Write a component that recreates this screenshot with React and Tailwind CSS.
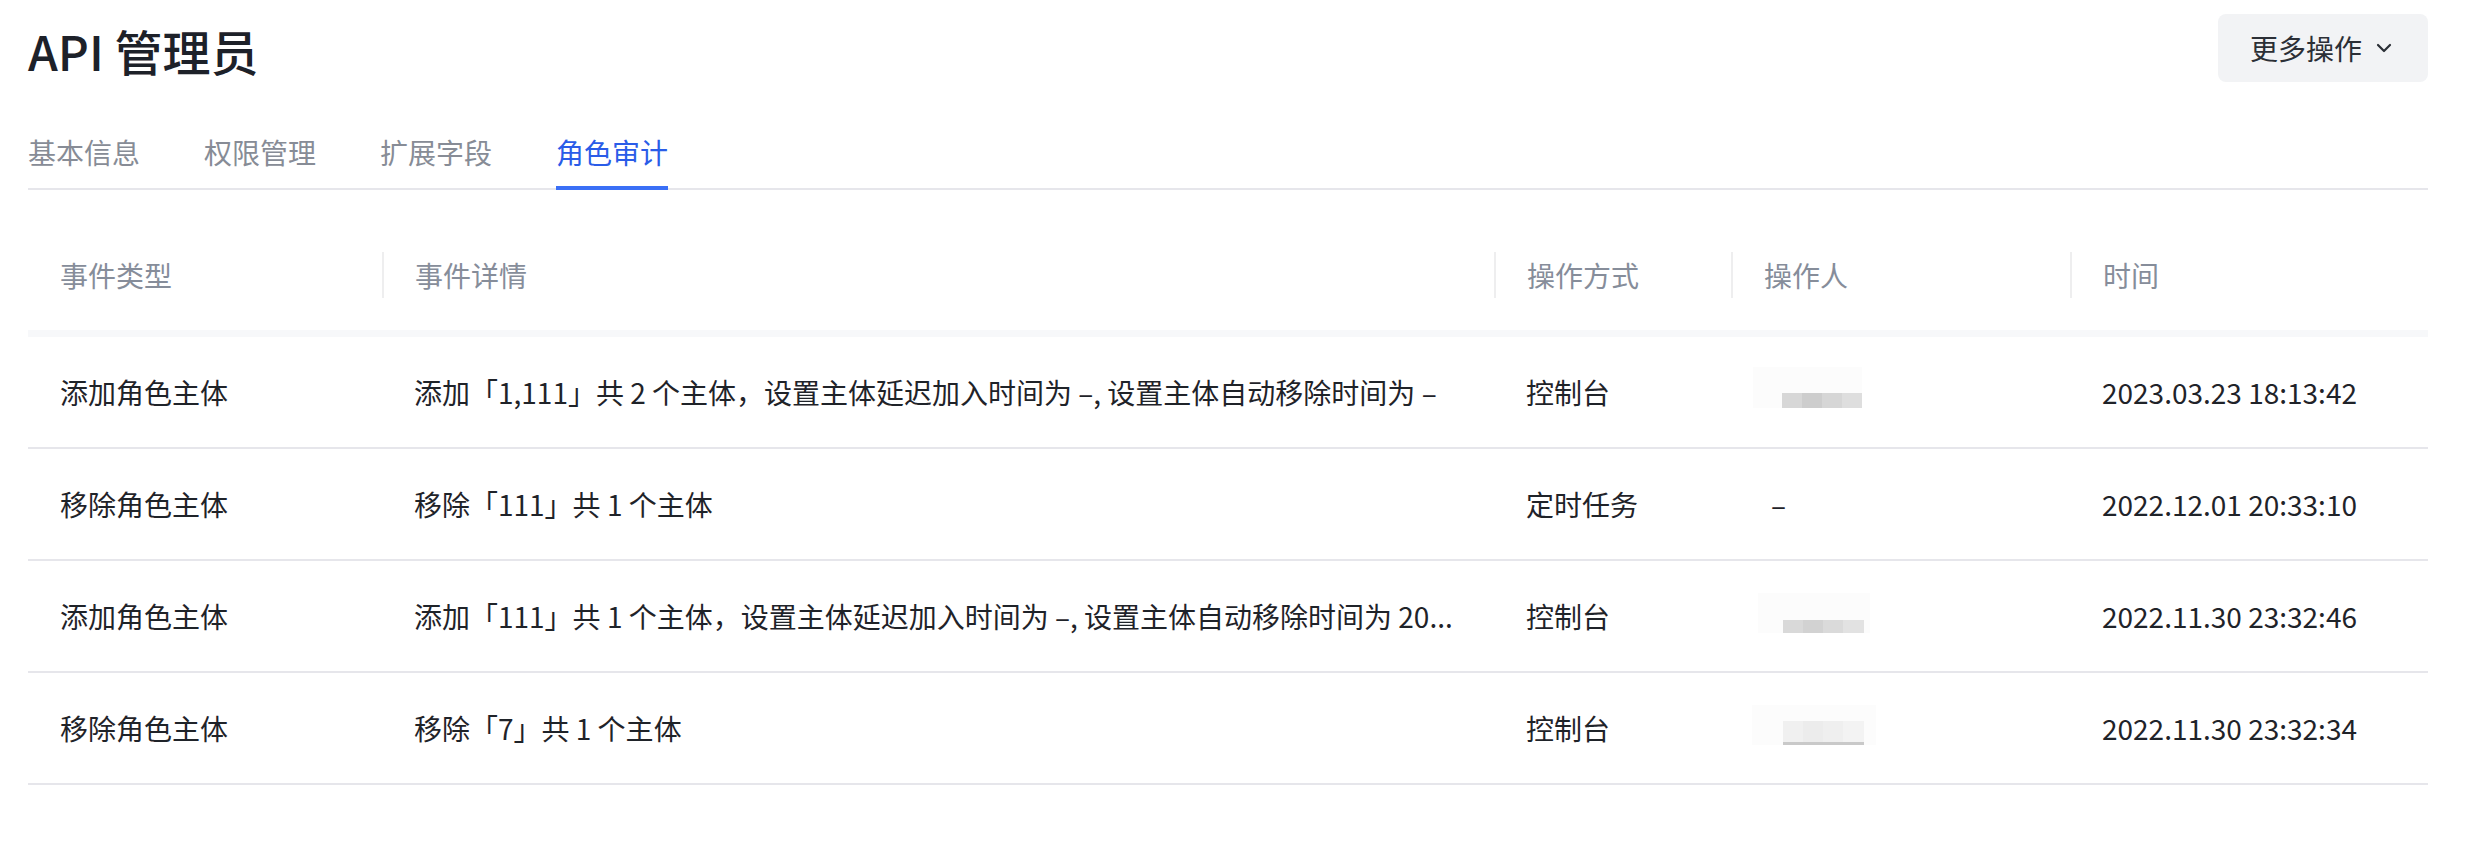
import { ChevronDown } from "lucide-react";

const tabs = ["基本信息", "权限管理", "扩展字段", "角色审计"];

const columns = ["事件类型", "事件详情", "操作方式", "操作人", "时间"];

const rows = [
  {
    type: "添加角色主体",
    detail: "添加「1,111」共 2 个主体，设置主体延迟加入时间为 –, 设置主体自动移除时间为 –",
    via: "控制台",
    operator: "a",
    time: "2023.03.23 18:13:42",
  },
  {
    type: "移除角色主体",
    detail: "移除「111」共 1 个主体",
    via: "定时任务",
    operator: null,
    time: "2022.12.01 20:33:10",
  },
  {
    type: "添加角色主体",
    detail: "添加「111」共 1 个主体，设置主体延迟加入时间为 –, 设置主体自动移除时间为 20...",
    via: "控制台",
    operator: "b",
    time: "2022.11.30 23:32:46",
  },
  {
    type: "移除角色主体",
    detail: "移除「7」共 1 个主体",
    via: "控制台",
    operator: "c",
    time: "2022.11.30 23:32:34",
  },
];

// mosaic placeholder for the masked operator name
function Masked({ variant }) {
  if (variant === "a") {
    return (
      <div className="-ml-[10px] -mt-[9px] flex h-[41px] w-[109px] flex-col bg-[#fcfcfc]">
        <div className="mt-[26px] ml-[29px] flex h-[15px] w-[80px] blur-[0.6px]">
          <div className="w-[20px] bg-[#d7d7d7]" />
          <div className="w-[20px] bg-[#cdcdcd]" />
          <div className="w-[20px] bg-[#d6d6d6]" />
          <div className="w-[20px] bg-[#dedede]" />
        </div>
      </div>
    );
  }
  if (variant === "b") {
    return (
      <div className="-ml-[5px] -mt-[6px] flex h-[40px] w-[112px] flex-col bg-[#fcfcfc]">
        <div className="mt-[27px] ml-[25px] flex h-[13px] w-[81px] blur-[0.6px]">
          <div className="w-[20px] bg-[#d9d9d9]" />
          <div className="w-[20px] bg-[#d2d2d2]" />
          <div className="w-[20px] bg-[#dadada]" />
          <div className="w-[21px] bg-[#e2e2e2]" />
        </div>
      </div>
    );
  }
  return (
    <div className="-ml-[11px] -mt-[6px] flex h-[40px] w-[124px] flex-col bg-[#fcfcfc]">
      <div className="mt-[16px] ml-[31px] flex h-[24px] w-[81px] flex-col blur-[0.6px]">
        <div className="flex flex-1">
          <div className="w-[20px] bg-[#f0f0f0]" />
          <div className="w-[20px] bg-[#ececec]" />
          <div className="w-[20px] bg-[#efefef]" />
          <div className="w-[21px] bg-[#f3f3f3]" />
        </div>
        <div className="h-[3px] bg-[#c9c9c9]" />
      </div>
    </div>
  );
}

export default function App() {
  return (
    <div className="h-[856px] w-[2466px] bg-white pl-[28px] pr-[38px] pt-[14px] font-['Noto_Sans_CJK_SC','Noto_Sans',sans-serif] text-[#1f2329]">
      <div className="flex h-[68px] items-center justify-between">
        <h1 className="mt-[4px] text-[48px] font-medium leading-none text-[#1d2129]">API 管理员</h1>
        <button className="flex h-[68px] items-center gap-[10px] rounded-[8px] bg-[#f2f3f5] px-[32px] text-[28px] text-[#2b2f36]">
          更多操作
          <ChevronDown size={24} strokeWidth={2.2} />
        </button>
      </div>

      <div className="mt-[50px] flex gap-[64px] border-b-2 border-[#e6e6eb] pb-[16px]">
        {tabs.map((tab, i) => (
          <div
            key={tab}
            className={`relative text-[28px] leading-[40px] ${i === 3 ? "text-[#2a5ce8]" : "text-[#878c96]"}`}
          >
            {tab}
            {i === 3 && <div className="absolute -bottom-[18px] left-0 right-0 h-[4px] bg-[#3a6ff6]" />}
          </div>
        ))}
      </div>

      <div className="mt-[30px]">
        <div className="grid h-[110px] grid-cols-[354px_1112px_237px_339px_1fr] text-[28px] text-[#868d9a]">
          {columns.map((col, i) => (
            <div key={col} className="flex items-center">
              {i > 0 && <span className="h-[46px] w-[2px] bg-[#eeeeef]" />}
              <span className={i > 0 ? "ml-[31px]" : "ml-[32px]"}>{col}</span>
            </div>
          ))}
        </div>
        <div className="h-[7px] bg-[#f7f8fa]" />

        {rows.map((row, i) => (
          <div
            key={i}
            className="grid h-[112px] grid-cols-[354px_1112px_237px_339px_1fr] border-b-2 border-[#e6e6eb] text-[28px]"
          >
            <div className="flex items-center px-[32px]">{row.type}</div>
            <div className="flex min-w-0 items-center px-[32px]">
              <span className="whitespace-nowrap">{row.detail}</span>
            </div>
            <div className="flex items-center px-[32px]">{row.via}</div>
            <div className="flex items-center px-[32px]">
              {row.operator ? <Masked variant={row.operator} /> : <span className="ml-[8px]">–</span>}
            </div>
            <div className="flex items-center px-[32px]">{row.time}</div>
          </div>
        ))}
      </div>
    </div>
  );
}
